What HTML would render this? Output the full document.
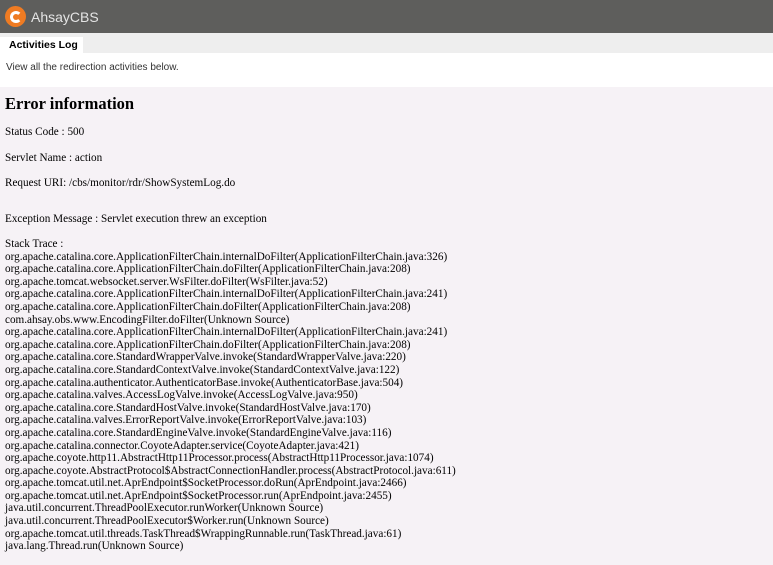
<!DOCTYPE html><html><head><style>
body{margin:0;width:773px;height:565px;overflow:hidden;background:#f6f2f6;font-family:"Liberation Serif",serif;}
.hd{height:33px;background:#5e5e5c;position:relative}
.logo{position:absolute;left:5px;top:6px;width:21px;height:21px;border-radius:50%;background:#ef7b22}
.logo:after{content:"";position:absolute;left:5px;top:5px;width:6px;height:6px;border:3px solid #fff;border-right-color:transparent;border-radius:50%}
.hd span{position:absolute;left:31px;top:9px;color:#e4e4e4;font:14px "Liberation Sans",sans-serif}
.tabs{height:20px;background:#eeeeee;position:relative}
.tab{position:absolute;left:0;top:4px;width:83px;height:16px;background:#fff;font:bold 10.5px "Liberation Sans",sans-serif;padding-left:9px;box-sizing:border-box;line-height:17px}
.desc{height:34px;background:#fff;font:10px "Liberation Sans",sans-serif;color:#333;padding:9px 0 0 6px;box-sizing:border-box}
.c{padding:0 5px;font-size:11.2px;color:#000}
h2{font-size:16.5px;margin:7px 0 12px}
p{margin:0;line-height:13px}
.st{line-height:12.6px}
</style></head><body>
<div class="hd"><div class="logo"></div><span>AhsayCBS</span></div>
<div class="tabs"><div class="tab">Activities Log</div></div>
<div class="desc">View all the redirection activities below.</div>
<div class="c">
<h2>Error information</h2>
<p style="margin-bottom:12.5px">Status Code : 500</p>
<p style="margin-bottom:12.5px">Servlet Name : action</p>
<p style="margin-bottom:23px">Request URI: /cbs/monitor/rdr/ShowSystemLog.do</p>
<p style="margin-bottom:12px">Exception Message : Servlet execution threw an exception</p>
<div class="st">Stack Trace :<br>
org.apache.catalina.core.ApplicationFilterChain.internalDoFilter(ApplicationFilterChain.java:326)<br>
org.apache.catalina.core.ApplicationFilterChain.doFilter(ApplicationFilterChain.java:208)<br>
org.apache.tomcat.websocket.server.WsFilter.doFilter(WsFilter.java:52)<br>
org.apache.catalina.core.ApplicationFilterChain.internalDoFilter(ApplicationFilterChain.java:241)<br>
org.apache.catalina.core.ApplicationFilterChain.doFilter(ApplicationFilterChain.java:208)<br>
com.ahsay.obs.www.EncodingFilter.doFilter(Unknown Source)<br>
org.apache.catalina.core.ApplicationFilterChain.internalDoFilter(ApplicationFilterChain.java:241)<br>
org.apache.catalina.core.ApplicationFilterChain.doFilter(ApplicationFilterChain.java:208)<br>
org.apache.catalina.core.StandardWrapperValve.invoke(StandardWrapperValve.java:220)<br>
org.apache.catalina.core.StandardContextValve.invoke(StandardContextValve.java:122)<br>
org.apache.catalina.authenticator.AuthenticatorBase.invoke(AuthenticatorBase.java:504)<br>
org.apache.catalina.valves.AccessLogValve.invoke(AccessLogValve.java:950)<br>
org.apache.catalina.core.StandardHostValve.invoke(StandardHostValve.java:170)<br>
org.apache.catalina.valves.ErrorReportValve.invoke(ErrorReportValve.java:103)<br>
org.apache.catalina.core.StandardEngineValve.invoke(StandardEngineValve.java:116)<br>
org.apache.catalina.connector.CoyoteAdapter.service(CoyoteAdapter.java:421)<br>
org.apache.coyote.http11.AbstractHttp11Processor.process(AbstractHttp11Processor.java:1074)<br>
org.apache.coyote.AbstractProtocol$AbstractConnectionHandler.process(AbstractProtocol.java:611)<br>
org.apache.tomcat.util.net.AprEndpoint$SocketProcessor.doRun(AprEndpoint.java:2466)<br>
org.apache.tomcat.util.net.AprEndpoint$SocketProcessor.run(AprEndpoint.java:2455)<br>
java.util.concurrent.ThreadPoolExecutor.runWorker(Unknown Source)<br>
java.util.concurrent.ThreadPoolExecutor$Worker.run(Unknown Source)<br>
org.apache.tomcat.util.threads.TaskThread$WrappingRunnable.run(TaskThread.java:61)<br>
java.lang.Thread.run(Unknown Source)</div>
</div>
</body></html>
